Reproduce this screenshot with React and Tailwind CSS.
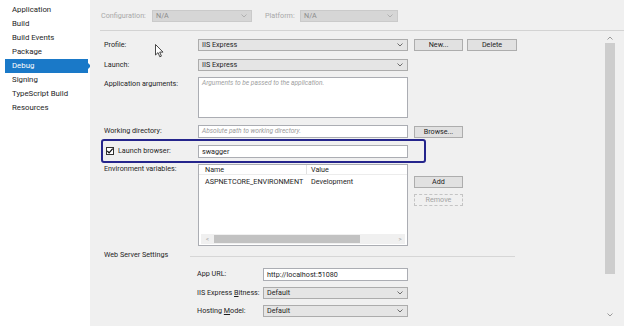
const Chevron = ({ color = '#6d6d6d' }) => (
  <svg width="6" height="4" viewBox="0 0 6 4" className="shrink-0">
    <path d="M0.5 0.5 L3 3 L5.5 0.5" fill="none" stroke={color} strokeWidth="1" />
  </svg>
);

const Select = ({ value, className = '' }) => (
  <div className={`h-[12px] shrink-0 flex items-center justify-between pl-[3px] pr-[4px] bg-[#e5e5e5] border border-[#acacac] ${className}`}>
    <span className="leading-none">{value}</span>
    <Chevron />
  </div>
);

const Input = ({ value, placeholder, className = '' }) => (
  <div className={`h-[13px] shrink-0 flex items-center px-[3px] bg-white border border-[#abadb3] ${className}`}>
    {value ? (
      <span className="leading-none">{value}</span>
    ) : (
      <span className="leading-none italic text-[#9a9a9a] text-[6.6px]">{placeholder}</span>
    )}
  </div>
);

const Button = ({ children, disabled, className = '' }) => (
  <div
    className={`h-[12px] shrink-0 flex items-center justify-center leading-none ${
      disabled ? 'border border-dashed border-[#c4c4c4] text-[#a3a3a3] bg-[#f0f0f0]' : 'border border-[#adadad] bg-[#e1e1e1]'
    } ${className}`}
  >
    {children}
  </div>
);

const navItems = ['Application', 'Build', 'Build Events', 'Package', 'Debug', 'Signing', 'TypeScript Build', 'Resources'];

const Sidebar = () => (
  <div className="w-[90px] h-full shrink-0 bg-white pt-[3px] text-[7.8px]">
    {navItems.map((item) =>
      item === 'Debug' ? (
        <div key={item} className="relative h-[14px] ml-[5px] w-[83px] bg-[#1a79c8] text-white flex items-center pl-[7px]">
          {item}
          <div className="absolute right-[-3px] top-[4px] w-0 h-0 border-y-[3px] border-y-transparent border-l-[3px] border-l-[#1a79c8]"></div>
        </div>
      ) : (
        <div key={item} className="h-[14px] flex items-center pl-[12px] text-[#1e1e1e]">
          {item}
        </div>
      )
    )}
  </div>
);

const Row = ({ label, children, className = '', labelClass = '' }) => (
  <div className={`flex shrink-0 ${className}`}>
    <div className={`w-[94px] shrink-0 ${labelClass}`}>{label}</div>
    {children}
  </div>
);

const EnvTable = () => (
  <div className="w-[210px] h-[82px] bg-white border border-[#abadb3] flex flex-col">
    <div className="h-[10px] flex items-center border-b border-[#ececec]">
      <div className="w-[108px] pl-[6px] border-r border-[#e2e2e2] leading-[9px]">Name</div>
      <div className="pl-[4px] leading-none">Value</div>
    </div>
    <div className="h-[12px] flex items-center mt-[1px]">
      <div className="w-[108px] pl-[6px] leading-none whitespace-nowrap">ASPNETCORE_ENVIRONMENT</div>
      <div className="pl-[4px] leading-none">Development</div>
    </div>
    <div className="flex-1"></div>
    <div className="h-[10px] bg-[#f0f0f0] flex items-center mx-[2px] mb-[1px]">
      <span className="w-[13px] text-center text-[6px] text-[#9a9a9a] leading-none">&lt;</span>
      <div className="w-[146px] h-[8px] bg-[#c2c2c2]"></div>
      <div className="flex-1"></div>
      <span className="w-[10px] text-center text-[6px] text-[#9a9a9a] leading-none">&gt;</span>
    </div>
  </div>
);

const Cursor = () => (
  <svg className="absolute left-[65px] top-[44px]" width="9" height="14" viewBox="0 0 9 14">
    <path d="M0.5 0.5 L0.5 11 L3 8.6 L4.8 12.8 L6.4 12.1 L4.7 8.1 L8 8.1 Z" fill="white" stroke="#333" strokeWidth="0.9" strokeLinejoin="round" />
  </svg>
);

export default function App() {
  return (
    <div
      className="w-[624px] h-[326px] flex overflow-hidden text-[7.2px] text-[#1e1e1e]"
      style={{ fontFamily: 'Roboto, "Noto Sans", sans-serif' }}
    >
      <Sidebar />
      <div className="relative flex-1 h-full bg-[#f0f0f0] flex flex-col">
        <div className="h-[31px] shrink-0 ml-[10px] border-b border-[#d3d3d3] flex items-start pt-[10px] text-[#a8a8a8]">
          <span className="ml-[1px] w-[51px] leading-[12px]">Configuration:</span>
          <div className="w-[100px] h-[12px] bg-[#d6d6d6] border border-[#cacaca] flex items-center justify-between pl-[3px] pr-[4px]">
            <span className="leading-none text-[#8c8c8c]">N/A</span>
            <Chevron color="#b0b0b0" />
          </div>
          <span className="ml-[13px] w-[35px] leading-[12px]">Platform:</span>
          <div className="w-[98px] h-[12px] bg-[#d6d6d6] border border-[#cacaca] flex items-center justify-between pl-[3px] pr-[4px]">
            <span className="leading-none text-[#8c8c8c]">N/A</span>
            <Chevron color="#b0b0b0" />
          </div>
        </div>

        <div className="flex flex-1 min-h-0">
          <div className="flex-1 pl-[14px] flex flex-col">
            <Row label="Profile:" className="mt-[8px] items-center">
              <Select value="IIS Express" className="w-[210px]" />
              <Button className="ml-[6px] w-[49px]">New...</Button>
              <Button className="ml-[4px] w-[50px]">Delete</Button>
            </Row>
            <Row label="Launch:" className="mt-[8px] items-center">
              <Select value="IIS Express" className="w-[210px]" />
            </Row>
            <Row label="Application arguments:" className="mt-[6px]" labelClass="pt-[2px] leading-[10px]">
              <div className="w-[210px] h-[41px] bg-white border border-[#abadb3] px-[3px] leading-[9px]">
                <span className="italic text-[#a0a0a0] text-[6.6px]">Arguments to be passed to the application.</span>
              </div>
            </Row>
            <Row label="Working directory:" className="mt-[7px] items-center">
              <Input placeholder="Absolute path to working directory." className="w-[210px]" />
              <Button className="ml-[6px] w-[49px]">Browse...</Button>
            </Row>
            <Row
              label={
                <div className="flex items-center pl-[2px]">
                  <div className="w-[8px] h-[8px] border border-[#333] bg-white flex items-center justify-center">
                    <svg width="8" height="8" viewBox="0 0 8 8" className="shrink-0">
                      <path d="M1.3 4 L3.1 5.9 L6.7 1.6" fill="none" stroke="#111" strokeWidth="1.2" />
                    </svg>
                  </div>
                  <span className="ml-[4px]">Launch browser:</span>
                </div>
              }
              className="mt-[7px] items-center"
            >
              <Input value="swagger" className="w-[210px] h-[12px]" />
            </Row>
            <Row label="Environment variables:" className="mt-[6px]" labelClass="leading-[10px]">
              <EnvTable />
              <div className="ml-[6px] flex flex-col">
                <Button className="mt-[12px] w-[49px]">Add</Button>
                <Button disabled className="mt-[6px] w-[49px]">Remove</Button>
              </div>
            </Row>
            <div className="flex items-center mt-[4px] h-[11px] shrink-0">
              <span className="w-[86px] shrink-0">Web Server Settings</span>
              <div className="w-[325px] h-[1px] bg-[#d6d6d6] mt-[2px]"></div>
            </div>
            <div className="pl-[93px] flex flex-col">
              <div className="flex items-center mt-[7px]">
                <span className="w-[66px] shrink-0">App URL:</span>
                <Input value="http://localhost:51080" className="w-[145px] h-[12px]" />
              </div>
              <div className="flex items-center mt-[6px]">
                <span className="w-[66px] shrink-0">
                  IIS Express <span className="underline">B</span>itness:
                </span>
                <Select value="Default" className="w-[145px]" />
              </div>
              <div className="flex items-center mt-[6px]">
                <span className="w-[66px] shrink-0">
                  Hosting <span className="underline">M</span>odel:
                </span>
                <Select value="Default" className="w-[145px]" />
              </div>
            </div>
          </div>

          <div className="w-[10px] mr-[9px] flex flex-col items-center pt-[5px] pb-[9px]">
            <svg width="6" height="4" viewBox="0 0 6 4">
              <path d="M0.5 3.5 L3 1 L5.5 3.5" fill="none" stroke="#9a9a9a" strokeWidth="1" />
            </svg>
            <div className="w-[10px] h-[231px] bg-[#cdcdcd] mt-[3px]"></div>
            <div className="flex-1"></div>
            <Chevron color="#9a9a9a" />
          </div>
        </div>

        <div className="absolute left-[11px] top-[139px] w-[325px] h-[24px] border-2 border-[#25258c] rounded-[3px] pointer-events-none"></div>
        <Cursor />
      </div>
    </div>
  );
}
